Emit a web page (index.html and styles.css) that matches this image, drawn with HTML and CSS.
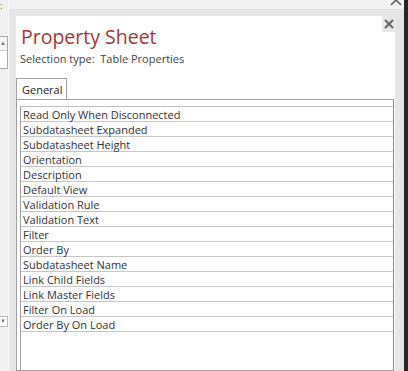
FILE: index.html
```html
<!DOCTYPE html>
<html lang="en">
<head>
    <meta charset="UTF-8">
    <title>Property Sheet</title>
    <link rel="stylesheet" href="styles.css">
</head>
<body>
    <div class="app">
        <div class="left-pane">
            <span class="left-glyph">:</span>
            <div class="scroll-box">
                <div class="scroll-btn">&#9650;</div>
            </div>
            <div class="combo-box">&#9660;</div>
        </div>

        <div class="frame">
            <div class="frame-top">
                <svg class="app-close" width="12" height="9" viewBox="0 0 12 9">
                    <path d="M1 -5 L11 5 M11 -5 L1 5" stroke="#5f5f5f" stroke-width="1.6" fill="none"/>
                </svg>
            </div>
            <div class="frame-body">
                <div class="sheet">
                    <div class="sheet-head">
                        <h1 class="sheet-title">Property Sheet</h1>
                        <button class="close-btn" title="Close">
                            <svg width="10" height="10" viewBox="0 0 10 10">
                                <path d="M1 1 L9 9 M9 1 L1 9" stroke="#666" stroke-width="2" fill="none"/>
                            </svg>
                        </button>
                    </div>
                    <div class="selection">Selection type:&nbsp; Table Properties</div>

                    <div class="tabs">
                        <div class="tab active">General</div>
                    </div>
                    <div class="tab-panel">
                        <div class="grid">
                            <div class="row">Read Only When Disconnected</div>
                            <div class="row">Subdatasheet Expanded</div>
                            <div class="row">Subdatasheet Height</div>
                            <div class="row">Orientation</div>
                            <div class="row">Description</div>
                            <div class="row">Default View</div>
                            <div class="row">Validation Rule</div>
                            <div class="row">Validation Text</div>
                            <div class="row">Filter</div>
                            <div class="row">Order By</div>
                            <div class="row">Subdatasheet Name</div>
                            <div class="row">Link Child Fields</div>
                            <div class="row">Link Master Fields</div>
                            <div class="row">Filter On Load</div>
                            <div class="row">Order By On Load</div>
                        </div>
                    </div>
                </div>
            </div>
        </div>

        <div class="edge"></div>
    </div>
</body>
</html>
```

FILE: styles.css
```css
body {
    margin: 0;
    padding: 0;
    width: 408px;
    height: 371px;
    overflow: hidden;
    background: #f0f0f0;
    font-family: 'Open Sans', 'Noto Sans', sans-serif;
    color: #444;
}
.app {
    display: flex;
    height: 371px;
}
.left-pane {
    width: 8px;
    background: #f0f0f0;
    border-right: 1px solid #fafafa;
    display: flex;
    flex-direction: column;
    overflow: hidden;
}
.left-glyph {
    font-size: 9px;
    line-height: 10px;
    color: #555;
    height: 13px;
    padding-top: 1px;
}
.scroll-box {
    margin-top: 22px;
    height: 31px;
    border: 1px solid #a8a8a8;
    border-left: none;
    background: #fff;
}
.scroll-btn {
    height: 13px;
    border-bottom: 1px solid #c8c8c8;
    background: #f4f4f4;
    font-size: 6px;
    line-height: 13px;
    color: #777;
    text-align: right;
    padding-right: 1px;
}
.combo-box {
    margin-top: 247px;
    height: 9px;
    border: 1px solid #b8b8b8;
    border-left: none;
    background: #fff;
    font-size: 6px;
    line-height: 9px;
    color: #777;
    text-align: right;
    padding-right: 1px;
}
.frame {
    flex: 1;
    display: flex;
    flex-direction: column;
}
.frame-top {
    height: 9px;
    background: #f2f2f2;
    border-bottom: 1px solid #e0e0e0;
    display: flex;
    justify-content: flex-end;
    padding-right: 2px;
}
.app-close {
    display: block;
}
.frame-body {
    flex: 1;
    display: flex;
    background: #e6e6e6;
    padding: 6px 9px 0 7px;
    min-height: 0;
}
.sheet {
    flex: 1;
    background: #fff;
    display: flex;
    flex-direction: column;
}
.sheet-head {
    display: flex;
    justify-content: space-between;
    align-items: flex-start;
}
.sheet-title {
    margin: 7px 0 0 5px;
    font-size: 19.5px;
    font-weight: 400;
    line-height: 28px;
    color: #a4373a;
}
.close-btn {
    width: 13px;
    height: 16px;
    padding: 0;
    border: none;
    background: #e6e6e6;
    display: flex;
    align-items: center;
    justify-content: center;
}
.close-btn svg {
    display: block;
}
.selection {
    margin: 0 0 0 4px;
    font-size: 11px;
    line-height: 15px;
    color: #444;
}
.tabs {
    display: flex;
    margin-top: 12px;
}
.tab {
    height: 20px;
    padding: 0 5px 0 5px;
    border: 1px solid #a0a0a0;
    border-bottom: none;
    font-size: 11px;
    line-height: 21px;
    color: #222;
    width: 39px;
}
.tab-panel {
    flex: 1;
    border: 1px solid #a0a0a0;
    border-right-color: #8a8a8a;
    margin-right: 1px;
    padding: 6px 0 0 3px;
    display: flex;
    flex-direction: column;
}
.grid {
    flex: 1;
    border-left: 1px solid #a0a0a0;
    border-top: 1px solid #c0c0c0;
}
.row {
    height: 14px;
    border-bottom: 1px solid #c8c8c8;
    padding-left: 2px;
    font-size: 11px;
    line-height: 15px;
    color: #333;
    white-space: nowrap;
}
.edge {
    width: 4px;
    background: #252525;
}
```
